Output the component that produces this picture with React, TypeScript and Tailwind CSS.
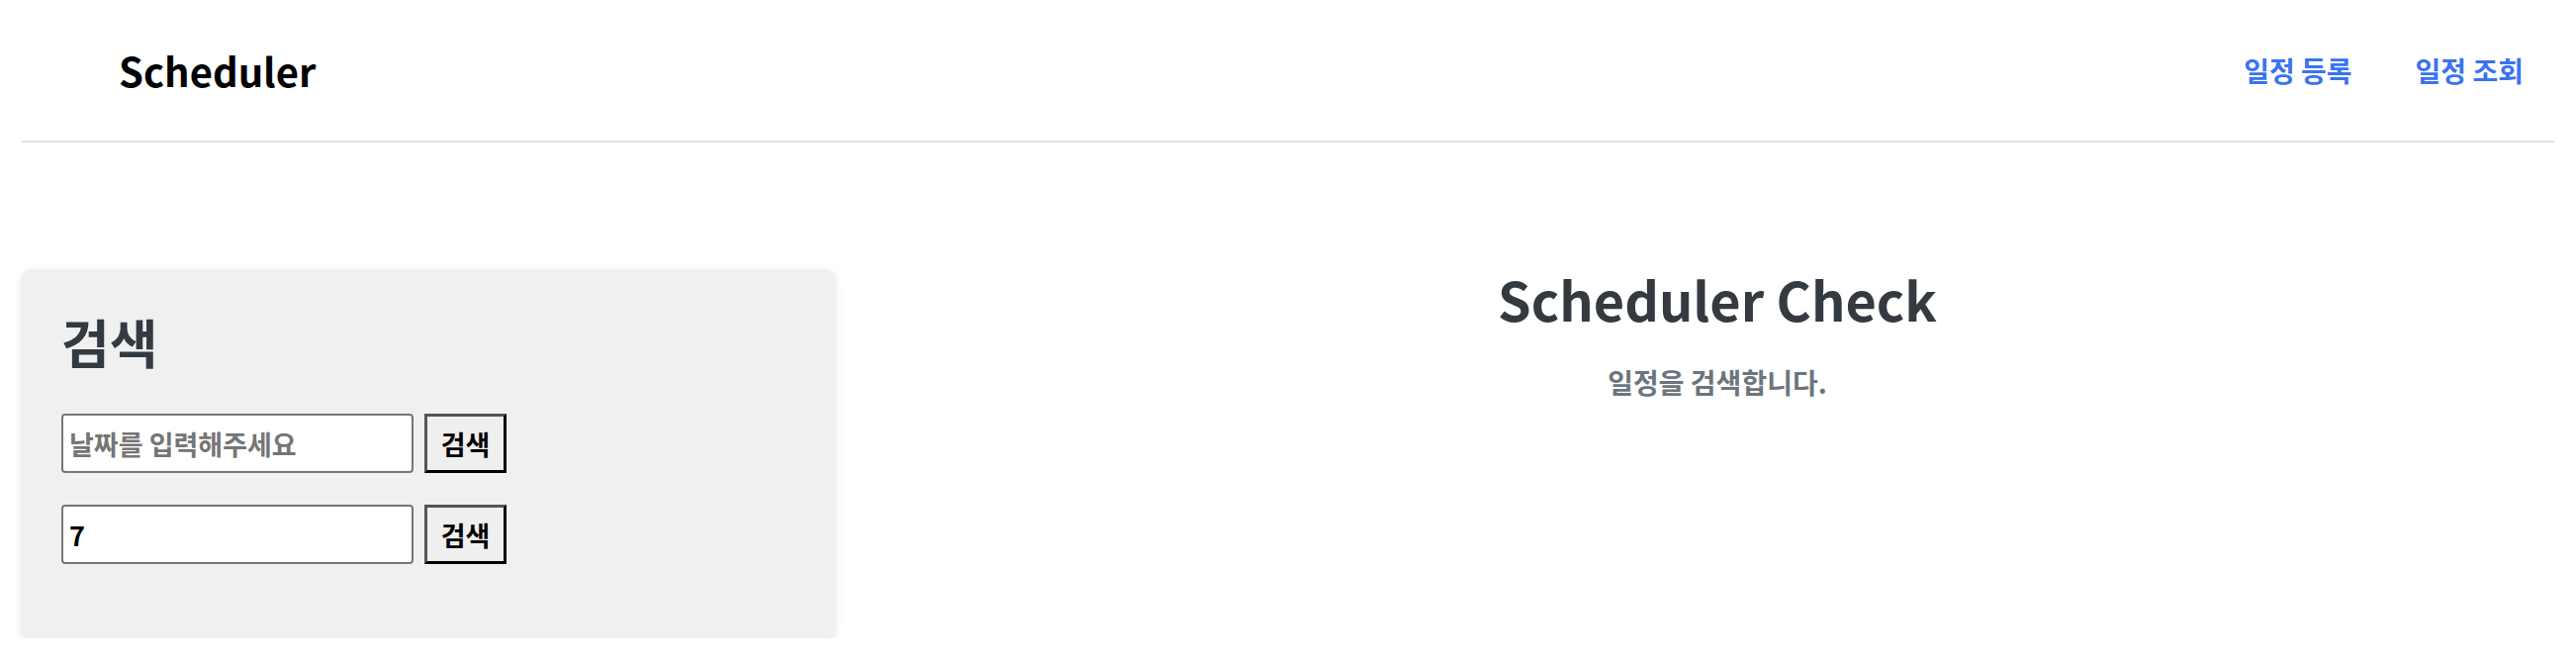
import React, { useState } from 'react';

const font = { fontFamily: '"Noto Sans CJK KR", "Noto Sans", sans-serif' };

const SearchRow: React.FC<{ value: string; placeholder?: string; onChange: (v: string) => void }> = ({
  value,
  placeholder,
  onChange,
}) => (
  <div className="flex items-center gap-[11px]">
    <input
      value={value}
      placeholder={placeholder}
      onChange={(e) => onChange(e.target.value)}
      className="w-[356px] h-[60px] bg-white border-2 border-[#767676] rounded-[4px] px-[6px] text-[27px] font-bold text-black placeholder:text-[#757575] outline-none"
    />
    <button className="h-[60px] w-[83px] bg-[#efefef] border-[3px] border-t-[#555555] border-l-[#555555] border-b-black border-r-black text-[27px] font-bold text-black leading-none">
      검색
    </button>
  </div>
);

const App: React.FC = () => {
  const [date, setDate] = useState('');
  const [num, setNum] = useState('7');

  return (
    <div className="w-full bg-white" style={font}>
      <header className="mx-[22px] h-[144px] border-b-2 border-[#dee2e6] flex items-center justify-between pl-[98px] pr-[31px]">
        <h1 className="text-[40px] font-bold text-black leading-none">Scheduler</h1>
        <nav className="flex items-center gap-[64px]">
          <a className="text-[28px] font-bold text-[#3a73f0] leading-none">일정 등록</a>
          <a className="text-[28px] font-bold text-[#3a73f0] leading-none">일정 조회</a>
        </nav>
      </header>

      <main className="mx-[22px] mt-[128px] flex gap-[46px]">
        <section className="w-[822px] h-[373px] shrink-0 bg-[#f0f0f0] rounded-[10px] shadow-[0_3px_8px_rgba(0,0,0,0.12)] px-[40px] pt-[38px]">
          <h2 className="text-[53px] font-bold text-[#343a40] leading-[70px]">검색</h2>
          <div className="mt-[38px] flex flex-col gap-[32px]">
            <SearchRow value={date} placeholder="날짜를 입력해주세요" onChange={setDate} />
            <SearchRow value={num} onChange={setNum} />
          </div>
        </section>

        <div className="flex-1 text-center">
          <h2 className="text-[54px] font-bold text-[#343a40] leading-[60px]">Scheduler Check</h2>
          <p className="mt-[36px] text-[28px] font-bold text-[#6c757d] leading-[36px]">일정을 검색합니다.</p>
        </div>
      </main>
    </div>
  );
};

export default App;
